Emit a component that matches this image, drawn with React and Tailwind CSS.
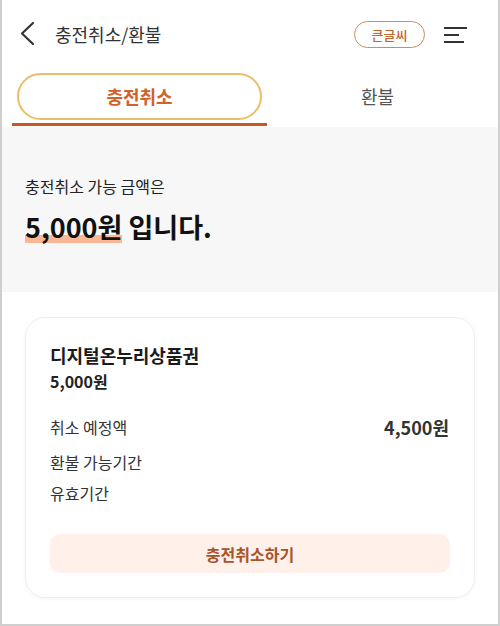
export default function App() {
  const font = { fontFamily: '"Noto Sans CJK KR", "Noto Sans", sans-serif' };
  return (
    <div
      className="w-[500px] h-[626px] bg-white border-x-2 border-b-2 border-[#cfcfcf] overflow-hidden flex flex-col"
      style={font}
    >
      {/* Header */}
      <div className="h-[68px] flex items-center pl-[18px] pr-[30px] shrink-0">
        <svg width="16" height="26" viewBox="0 0 16 26" className="shrink-0">
          <path d="M13 2 L2 12.5 L13 23" fill="none" stroke="#333" strokeWidth="2.2" strokeLinecap="round" strokeLinejoin="round" />
        </svg>
        <div className="ml-[19px] text-[18px] text-[#333] leading-none">충전취소/환불</div>
        <div className="ml-auto h-[27px] w-[71px] rounded-full border border-[#d08a5c] flex items-center justify-center text-[13px] font-medium text-[#c2652b] leading-none">
          큰글씨
        </div>
        <svg width="24" height="18" viewBox="0 0 24 18" className="ml-[19px] shrink-0">
          <rect x="0" y="2" width="23" height="2" fill="#333" />
          <rect x="0" y="9" width="15" height="2" fill="#333" />
          <rect x="0" y="16" width="20" height="2" fill="#333" />
        </svg>
      </div>

      {/* Tabs */}
      <div className="mt-[5px] px-[10px] flex shrink-0">
        <div className="w-[255px] flex flex-col">
          <div className="mx-[5px] h-[47px] rounded-full border-2 border-[#f0bb68] flex items-center justify-center text-[18px] font-bold text-[#d2612a]">
            충전취소
          </div>
          <div className="mt-[3px] h-[3px] bg-[#c9581f]" />
        </div>
        <div className="flex-1 h-[47px] flex items-center justify-center text-[18px] text-[#555]">
          환불
        </div>
      </div>

      {/* Summary */}
      <div className="mt-[1px] h-[165px] bg-[#f7f7f7] pl-[23px] pt-[47px] shrink-0">
        <div className="text-[16px] leading-[24px] text-[#222]">충전취소 가능 금액은</div>
        <div className="mt-[11px] text-[27px] leading-[35px] font-bold text-[#111]">
          <span className="relative isolate inline-block">
            5,000원
            <span className="absolute left-0 right-0 bottom-[1px] h-[8px] bg-[#f9b793] -z-10" />
          </span>{" "}
          입니다.
        </div>
      </div>

      {/* Card */}
      <div className="mt-[25px] mx-[23px] rounded-[20px] border border-[#eeeeee] shadow-[0_1px_4px_rgba(0,0,0,0.04)] pt-[25px] pb-[24px] px-[24px]">
        <div className="text-[18px] leading-[25px] font-bold text-[#1a1a1a]">디지털온누리상품권</div>
        <div className="mt-[2px] text-[16px] leading-[22px] font-bold text-[#222]">5,000원</div>
        <div className="mt-[22px] h-[26px] flex items-center justify-between">
          <span className="text-[16px] text-[#333]">취소 예정액</span>
          <span className="text-[18px] font-bold text-[#333] mr-[1px]">4,500원</span>
        </div>
        <div className="mt-[11px] text-[16px] leading-[22px] text-[#333]">환불 가능기간</div>
        <div className="mt-[9px] text-[16px] leading-[22px] text-[#333]">유효기간</div>
        <div className="mt-[30px] h-[39px] rounded-[10px] bg-[#fff0e9] flex items-center justify-center text-[16px] font-bold text-[#a9532a]">
          충전취소하기
        </div>
      </div>
    </div>
  );
}
